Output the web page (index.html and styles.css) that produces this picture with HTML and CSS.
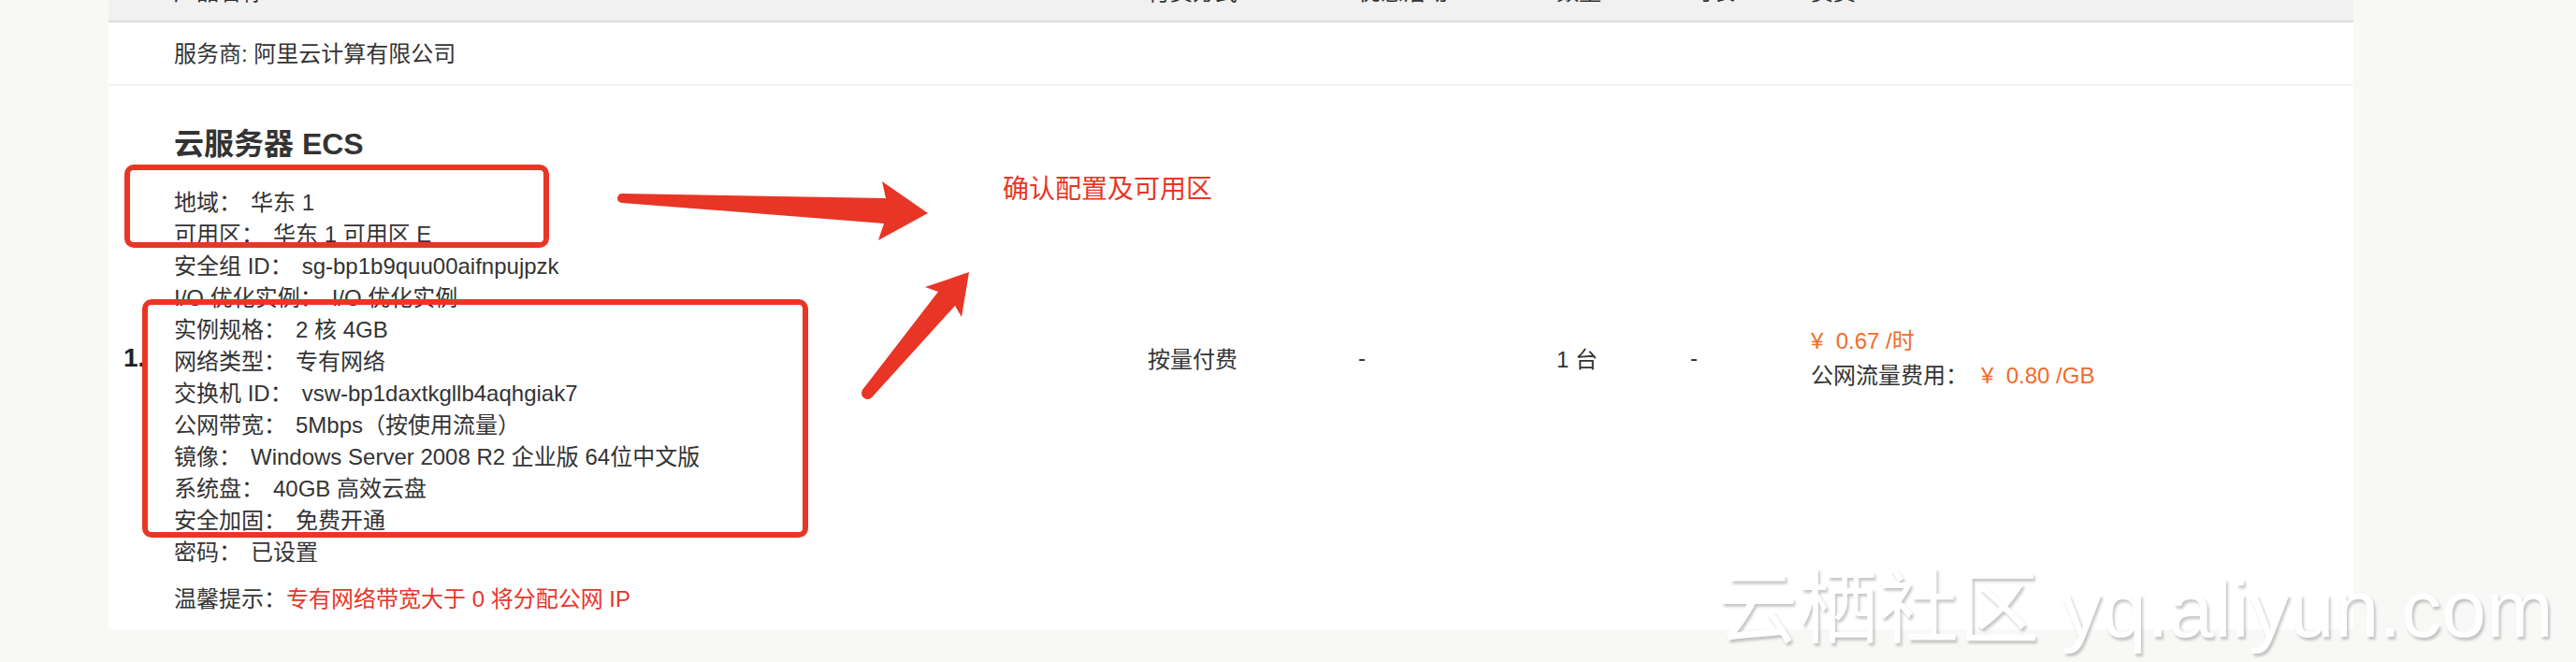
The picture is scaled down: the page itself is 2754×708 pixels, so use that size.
FILE: index.html
```html
<!DOCTYPE html>
<html lang="zh-CN">
  <head>
    <meta charset="UTF-8" />
    <meta name="viewport" content="width=device-width, initial-scale=1.0" />
    <title>确认订单</title>
    <link rel="stylesheet" href="styles.css">
  </head>
  <body>
    <div class="page">
      <div class="order">
        <div class="row head">
          <span></span>
          <span>产品名称</span>
          <span>付费方式</span>
          <span>优惠活动</span>
          <span>数量</span>
          <span>时长</span>
          <span>资费</span>
        </div>
        <div class="vendor">服务商: 阿里云计算有限公司</div>
        <div class="row item">
          <div class="num">1.</div>
          <div class="info">
            <h2>云服务器 ECS</h2>
            <ul class="spec">
              <li><span class="k">地域：</span>华东 1</li>
              <li><span class="k">可用区：</span>华东 1 可用区 E</li>
              <li><span class="k">安全组 ID：</span>sg-bp1b9quu00aifnpujpzk</li>
              <li><span class="k">I/O 优化实例：</span>I/O 优化实例</li>
              <li><span class="k">实例规格：</span>2 核 4GB</li>
              <li><span class="k">网络类型：</span>专有网络</li>
              <li><span class="k">交换机 ID：</span>vsw-bp1daxtkgllb4aqhgiak7</li>
              <li><span class="k">公网带宽：</span>5Mbps（按使用流量）</li>
              <li><span class="k">镜像：</span>Windows Server 2008 R2 企业版 64位中文版</li>
              <li><span class="k">系统盘：</span>40GB 高效云盘</li>
              <li><span class="k">安全加固：</span>免费开通</li>
              <li><span class="k">密码：</span>已设置</li>
            </ul>
            <p class="tip">温馨提示：<span class="red">专有网络带宽大于 0 将分配公网 IP</span></p>
          </div>
          <div>按量付费</div>
          <div>-</div>
          <div>1 台</div>
          <div>-</div>
          <div class="price">
            <p class="orange">¥&nbsp;&nbsp;0.67 /时</p>
            <p>公网流量费用：<span class="orange fee">¥&nbsp;&nbsp;0.80 /GB</span></p>
          </div>
        </div>
      </div>
    </div>

    <!-- annotations drawn over the screenshot -->
    <div class="box box1"></div>
    <div class="box box2"></div>
    <svg class="arrows" width="450" height="260" viewBox="0 0 450 260">
      <polygon fill="#e93526" points="65,27 347,32 343,14 392,48 339,77 345,59 65,37" />
      <circle fill="#e93526" cx="65" cy="32" r="5" />
      <polygon fill="#e93526" points="322,237 403,132 389,127 436,111 428,159 421,147 333,244" />
      <circle fill="#e93526" cx="327.5" cy="240.5" r="6.5" />
    </svg>
    <div class="note">确认配置及可用区</div>
    <div class="watermark">云栖社区 yq.aliyun.com</div>
  </body>
</html>
```

FILE: styles.css
```css
body {
  margin: 0;
  display: flow-root;
  position: relative;
  height: 708px;
  overflow: hidden;
  background-color: #f8f8f6;
  font-family: "Liberation Sans", "Noto Sans CJK SC", sans-serif;
  color: #333;
}

p,
h2 {
  margin: 0;
}

.page {
  margin-top: -44px;
  padding-left: 116px;
}

.order {
  width: 2400px;
  background-color: #fff;
  font-size: 24px;
}

.row {
  display: grid;
  grid-template-columns: 54px 1041px 225px 212px 143px 129px 1fr;
  padding-left: 16px;
}

.head {
  height: 66px;
  align-items: center;
  background-color: #f1f1f1;
  border-bottom: 2px solid #dcdcdc;
}

.vendor {
  padding: 17px 0 15px 70px;
  line-height: 34px;
  border-bottom: 2px solid #f3f3f3;
}

.item {
  align-items: center;
}

.num {
  font-size: 28px;
  font-weight: bold;
  color: #222;
}

.info {
  padding: 40px 0 15px;
}

.info h2 {
  margin-bottom: 24px;
  font-size: 32px;
  line-height: 44px;
}

.spec {
  list-style: none;
  margin: 0;
  padding: 0;
  line-height: 34px;
}

.k {
  margin-right: 10px;
}

.tip {
  margin-top: 16px;
  line-height: 34px;
}

.red {
  color: #e8352b;
}

.price {
  line-height: 37px;
}

.orange {
  color: #f26b2a;
}

.fee {
  margin-left: 14px;
}

.box {
  position: absolute;
  box-sizing: border-box;
  border: 6px solid #e93526;
  border-radius: 10px;
}

.box1 {
  left: 133px;
  top: 176px;
  width: 454px;
  height: 89px;
}

.box2 {
  left: 152px;
  top: 320px;
  width: 712px;
  height: 255px;
}

.arrows {
  position: absolute;
  left: 600px;
  top: 180px;
}

.note {
  position: absolute;
  left: 1072px;
  top: 186px;
  font-size: 28px;
  line-height: 34px;
  color: #e93526;
}

.watermark {
  position: absolute;
  left: 1836px;
  top: 608px;
  font-size: 86px;
  line-height: 1;
  color: #fff;
  white-space: nowrap;
  text-shadow: 2px 3px 3px rgba(0, 0, 0, 0.22);
}
```
